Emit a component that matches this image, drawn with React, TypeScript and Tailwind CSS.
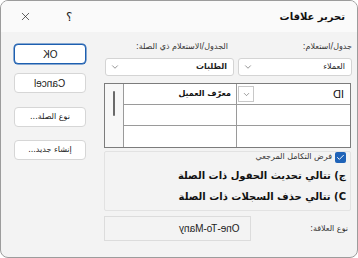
import { ChevronDown, X, Check } from 'lucide-react';

const ar = { fontFamily: '"DejaVu Sans", "Noto Sans", sans-serif' };
const lat = { fontFamily: '"Liberation Sans", Arial, sans-serif' };

function Mirror({ children }: { children: string }) {
  return <span className="inline-block -scale-x-100" style={lat}>{children}</span>;
}

function SideButton({ children, primary = false }: { children: React.ReactNode; primary?: boolean }) {
  return (
    <button
      className={`w-[72px] h-[20px] rounded-[4px] bg-white text-[10px] text-[#1a1a1a] flex items-center justify-center ${
        primary ? 'border border-[#1d5fb0] ring-[0.5px] ring-[#1d5fb0]' : 'border border-[#d6d6d6]'
      }`}
    >
      {children}
    </button>
  );
}

function Select({ value, width, bold = false }: { value: string; width: string; bold?: boolean }) {
  return (
    <div className={`${width} h-[18px] bg-white border border-[#d4d4d4] rounded-[3px] flex items-center justify-between pl-[4px] pr-[6px]`}>
      <span className={`text-[8px] text-[#222] ${bold ? 'font-bold' : ''}`} style={ar}>{value}</span>
      <ChevronDown className="w-[10px] h-[10px] text-[#555]" strokeWidth={1.5} />
    </div>
  );
}

export default function App() {
  return (
    <div className="w-[358px] h-[258px] bg-[#f3f3f3] border border-[#9c9c9c] rounded-[8px] overflow-hidden flex flex-col">
      {/* Title bar */}
      <div className="h-[31px] bg-[#fafafa] flex items-center justify-between pl-[18px] pr-[12px]">
        <div className="flex items-center gap-[34px]">
          <X className="w-[13px] h-[13px] text-[#222]" strokeWidth={1.3} />
          <span className="text-[12px] text-[#222]" style={ar}>؟</span>
        </div>
        <span dir="rtl" className="text-[10px] font-bold text-[#111]" style={ar}>تحرير علاقات</span>
      </div>

      <div className="flex flex-1">
        {/* Buttons */}
        <div className="w-[103px] pl-[13px] pt-[12px] flex flex-col">
          <SideButton primary><Mirror>OK</Mirror></SideButton>
          <div className="h-[9px]" />
          <SideButton><Mirror>Cancel</Mirror></SideButton>
          <div className="h-[14px]" />
          <SideButton><span dir="rtl" className="text-[8px]" style={ar}>نوع الصلة...</span></SideButton>
          <div className="h-[13px]" />
          <SideButton><span dir="rtl" className="text-[8px]" style={ar}>إنشاء جديد...</span></SideButton>
        </div>

        {/* Main area */}
        <div className="w-[248px] pt-[9px] flex flex-col">
          <div dir="rtl" className="flex gap-[4px] text-[8px] text-[#333]" style={ar}>
            <div className="w-[114px] flex flex-col gap-[6px]">
              <span className="h-[11px]">جدول/استعلام:</span>
              <Select value="العملاء" width="w-[114px]" />
            </div>
            <div className="w-[129px] flex flex-col gap-[6px]">
              <span className="pr-[6px] h-[11px]">الجدول/الاستعلام ذي الصلة:</span>
              <Select value="الطلبات" width="w-[129px]" bold />
            </div>
          </div>

          {/* Field grid */}
          <div className="mt-[7px] w-[247px] h-[65px] border border-[#7c7c7c] flex bg-white">
            <div className="w-[19px] border-r border-[#9a9a9a] bg-[#f7f7f7] flex justify-center pt-[7px]">
              <div className="w-[2px] h-[25px] bg-[#6a6a6a] rounded" />
            </div>
            <div className="flex-1 grid grid-cols-2 grid-rows-[21px_21px_1fr]">
              <div className="border-b border-r border-[#9a9a9a] flex items-center justify-end pr-[5px]">
                <span dir="rtl" className="text-[8px] font-bold text-[#111]" style={ar}>معرّف العميل</span>
              </div>
              <div className="border-b border-[#9a9a9a] flex items-center justify-between pl-[1px] pr-[6px]">
                <div className="w-[16px] h-[16px] border border-[#c8c8c8] bg-white flex items-center justify-center">
                  <ChevronDown className="w-[9px] h-[9px] text-[#555]" strokeWidth={1.5} />
                </div>
                <span className="text-[11px] text-[#111]"><Mirror>ID</Mirror></span>
              </div>
              <div className="border-b border-r border-[#9a9a9a]" />
              <div className="border-b border-[#9a9a9a]" />
              <div className="border-r border-[#9a9a9a]" />
              <div />
            </div>
          </div>

          {/* Integrity group */}
          <div className="mt-[3px] w-[247px] h-[60px] border border-[#e2e2e2] rounded-[2px] flex flex-col items-end pr-[4px]">
            <div dir="rtl" className="flex items-center gap-[3px] -mt-[1px] h-[12px]">
              <div className="w-[11px] h-[11px] rounded-[2px] bg-[#1f63b8] flex items-center justify-center">
                <Check className="w-[9px] h-[9px] text-white" strokeWidth={2.5} />
              </div>
              <span className="text-[8px] text-[#333]" style={ar}>فرض التكامل المرجعي</span>
            </div>
            <div dir="rtl" className="mt-[5px] text-[10px] font-bold text-[#111]" style={ar}>ج) تتالي تحديث الحقول ذات الصلة</div>
            <div dir="rtl" className="mt-[6px] text-[10px] font-bold text-[#111]" style={ar}>C) تتالي حذف السجلات ذات الصلة</div>
          </div>

          {/* Relation type */}
          <div className="mt-[5px] flex items-center">
            <div className="w-[147px] h-[25px] border border-[#dcdcdc] flex items-center justify-end pr-[10px]">
              <span className="text-[10px] text-[#222]"><Mirror>One-To-Many</Mirror></span>
            </div>
            <span dir="rtl" className="ml-auto mr-[4px] text-[8px] text-[#333]" style={ar}>نوع العلاقة:</span>
          </div>
        </div>
      </div>
    </div>
  );
}
